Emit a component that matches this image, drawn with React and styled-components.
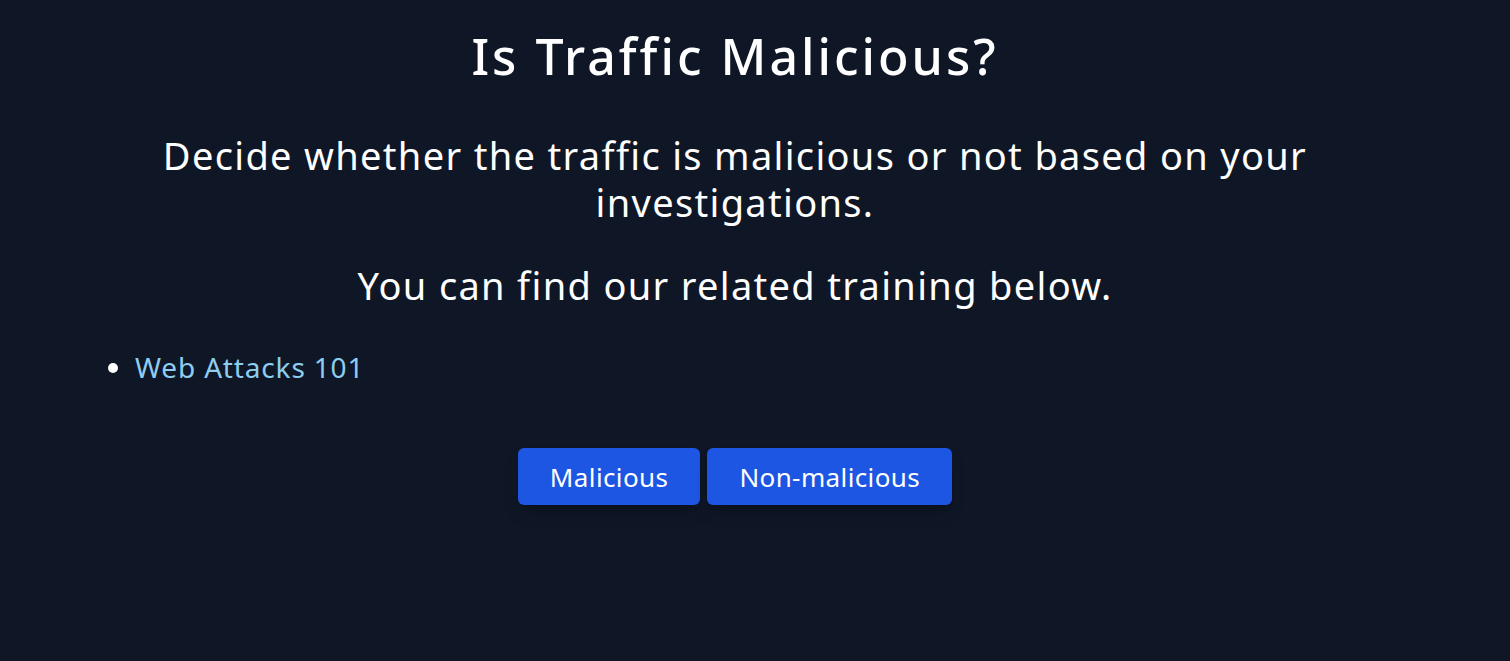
import styled, { createGlobalStyle } from 'styled-components';

const Global = createGlobalStyle`
  html, body {
    margin: 0;
    padding: 0;
    background: #0f1727;
  }
  body {
    min-height: 661px;
    font-family: 'Noto Sans', 'Open Sans', sans-serif;
    color: #ffffff;
  }
`

const Page = styled.div`
  min-height: 661px;
  padding-right: 40px;
  box-sizing: border-box;
`

const Content = styled.main`
  max-width: 1280px;
  margin: 0 auto;
  padding-top: 26px;
  text-align: center;
`

const Title = styled.h1`
  margin: 0 0 46px;
  font-size: 50px;
  line-height: 60px;
  font-weight: 500;
  letter-spacing: 0.06em;
`

const Lead = styled.p`
  margin: 0 0 36px;
  font-size: 38px;
  line-height: 47px;
  font-weight: 400;
  letter-spacing: 0.035em;
`

const Trainings = styled.ul`
  margin: 0 0 62px;
  padding: 3px 0 0 40px;
  text-align: left;
  font-size: 28px;
  line-height: 38px;
  letter-spacing: 0.03em;

  li::marker {
    color: #ffffff;
  }
`

const TrainingLink = styled.a`
  color: #8ecdf0;
  text-decoration: none;
`

const Actions = styled.div`
  display: flex;
  justify-content: center;
  gap: 7px;
`

const Choice = styled.button`
  height: 57px;
  padding: 0 32px;
  border: none;
  border-radius: 6px;
  background: #1d56e2;
  color: #ffffff;
  font-family: inherit;
  font-size: 26px;
  letter-spacing: 0.015em;
  box-shadow: 0 10px 15px -3px rgba(0, 0, 0, 0.25), 0 4px 6px -4px rgba(0, 0, 0, 0.2);
  cursor: pointer;
`

export default function App() {
  return (
    <Page>
      <Global />
      <Content>
        <Title>Is Traffic Malicious?</Title>
        <Lead>Decide whether the traffic is malicious or not based on your investigations.</Lead>
        <Lead>You can find our related training below.</Lead>
        <Trainings>
          <li><TrainingLink href="#">Web Attacks 101</TrainingLink></li>
        </Trainings>
        <Actions>
          <Choice>Malicious</Choice>
          <Choice>Non-malicious</Choice>
        </Actions>
      </Content>
    </Page>
  )
}
